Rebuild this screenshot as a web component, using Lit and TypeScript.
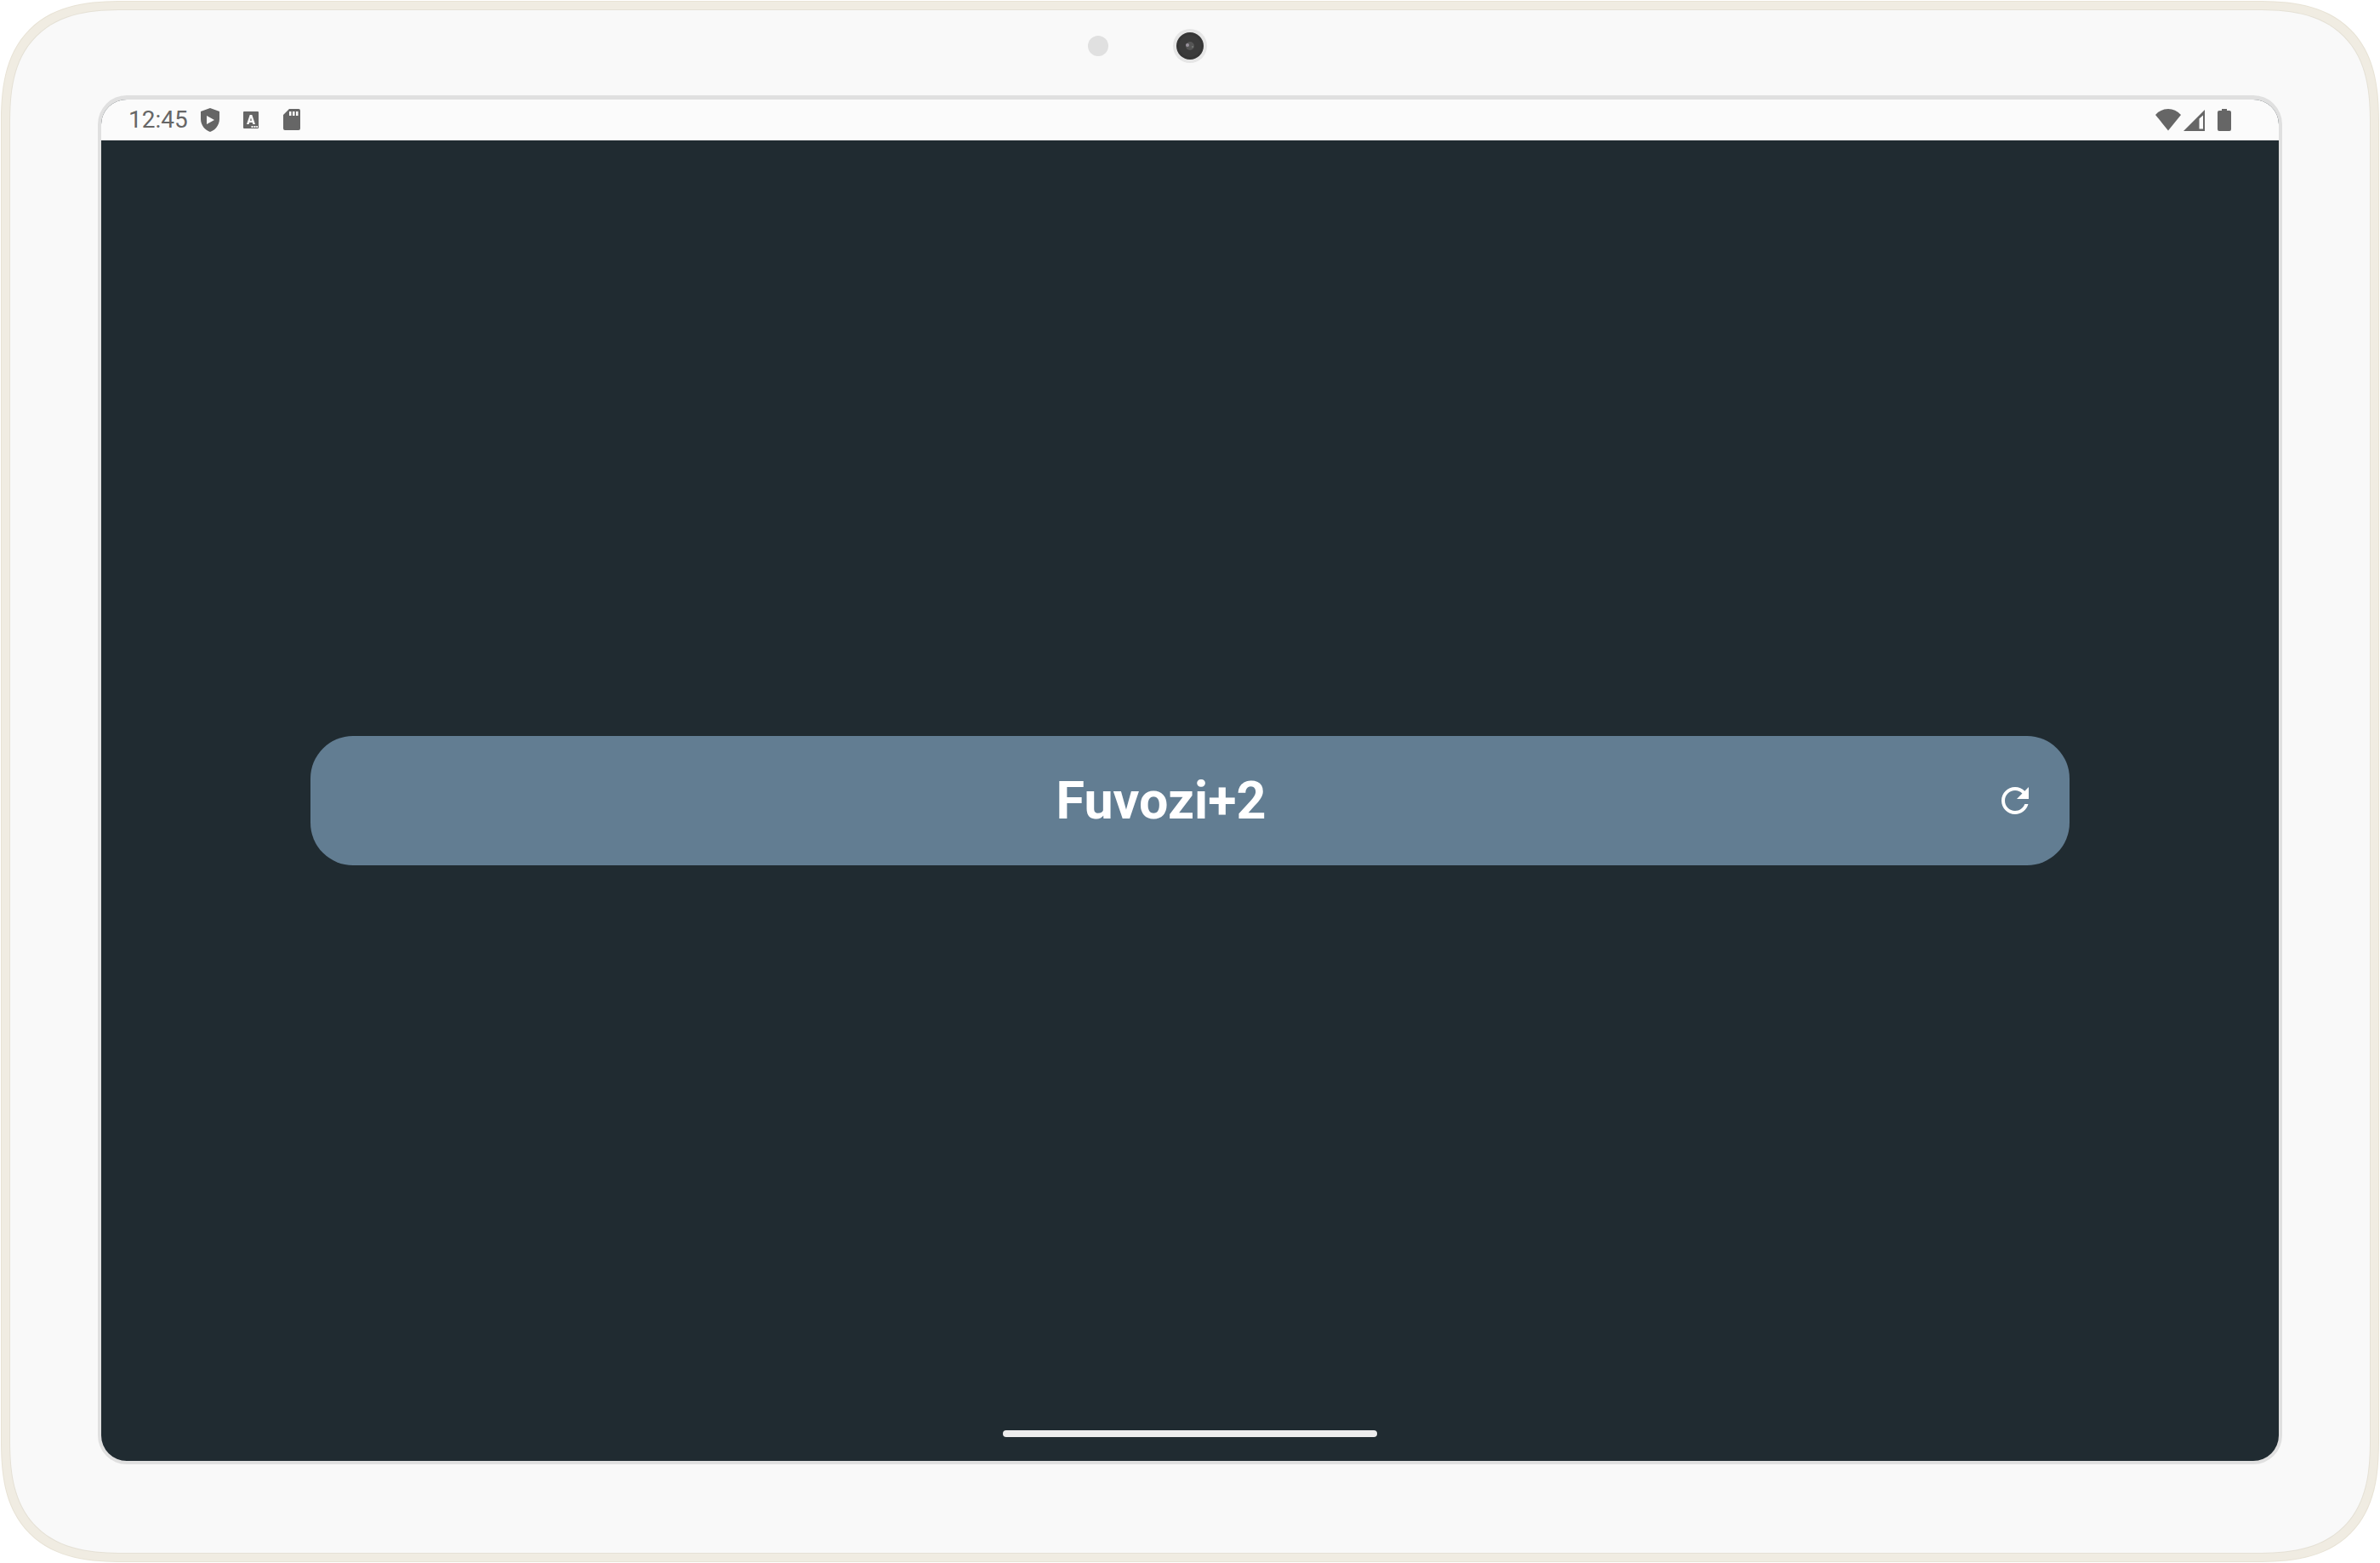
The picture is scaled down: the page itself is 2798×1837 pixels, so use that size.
import { LitElement, html, css } from "lit";
import { customElement, property } from "lit/decorators.js";

@customElement("status-bar")
class StatusBar extends LitElement {
  @property() time = "";

  static styles = css`
    :host {
      display: flex;
      align-items: center;
      justify-content: space-between;
      height: 48px;
      padding: 0 50px 0 32px;
      background: #fbfbfb;
      color: #666;
    }
    .group {
      display: flex;
      align-items: center;
    }
    .notices {
      gap: 20px;
      margin-left: 12px;
    }
    .time {
      font-size: 28px;
      line-height: 48px;
    }
    .icon {
      display: block;
      width: 28px;
      height: 28px;
      fill: currentColor;
    }
    .wifi,
    .signal {
      width: 32px;
    }
    .battery {
      margin-left: 4px;
    }
  `;

  render() {
    return html`
      <div class="group">
        <span class="time">${this.time}</span>
        <div class="group notices">
          <svg class="icon" viewBox="0 0 28 28" role="img" aria-label="Play Protect">
            <path fill-rule="evenodd" d="M14 0 25 4V13C25 20 20 26 14 28C8 26 3 20 3 13V4ZM10 9V19L19 14Z" />
          </svg>
          <svg class="icon" viewBox="0 0 28 28" role="img" aria-label="Text service">
            <path
              fill-rule="evenodd"
              d="M6 4H22Q23 4 23 5V23Q23 24 22 24H6Q5 24 5 23V5Q5 4 6 4ZM12.7 8 9 19H11.6L12.3 17H15.7L16.4 19H19L15.3 8ZM13 14.8 14 11.5 15 14.8ZM14.5 21V23H16.5V21ZM17.5 21V23H19.5V21ZM20.3 21V23H22V21Z"
            />
          </svg>
          <svg class="icon" viewBox="0 0 28 28" role="img" aria-label="SD card">
            <path
              fill-rule="evenodd"
              d="M11 1H22Q24 1 24 3V24Q24 26 22 26H6Q4 26 4 24V8ZM11 4V9H13.5V4ZM15 4V9H17.5V4ZM19 4V9H21.5V4Z"
            />
          </svg>
        </div>
      </div>
      <div class="group">
        <svg class="icon wifi" viewBox="0 0 32 28" role="img" aria-label="Wi-Fi">
          <path d="M16 26.500 1 8Q7.500 1 16 1T31 8Z" />
        </svg>
        <svg class="icon signal" viewBox="0 0 32 28" role="img" aria-label="Mobile signal">
          <path fill-rule="evenodd" d="M27 2V27H2ZM25 8.500 20.500 12.500V24.500H25Z" />
        </svg>
        <svg class="icon battery" viewBox="0 0 28 28" role="img" aria-label="Battery full">
          <path d="M11 1H17V3H20Q22 3 22 5V25Q22 27 20 27H8Q6 27 6 25V5Q6 3 8 3H11Z" />
        </svg>
      </div>
    `;
  }
}

@customElement("refresh-button")
class RefreshButton extends LitElement {
  @property() label = "";

  static styles = css`
    :host {
      display: block;
    }
    .button {
      display: flex;
      align-items: center;
      gap: 20px;
      box-sizing: border-box;
      width: 100%;
      min-height: 152px;
      padding: 0 40px;
      border: 0;
      border-radius: 50px;
      background: #627d92;
      color: #fff;
      font-family: inherit;
      cursor: pointer;
    }
    .label {
      flex: 1;
      text-align: center;
      font-size: 61px;
      font-weight: 700;
      line-height: 72px;
    }
    .icon {
      width: 48px;
      height: 48px;
      fill: currentColor;
    }
  `;

  render() {
    return html`
      <button class="button" type="button">
        <span class="label">${this.label}</span>
        <svg class="icon" viewBox="0 0 24 24" aria-hidden="true">
          <path
            d="M17.650 6.350C16.200 4.900 14.210 4 12 4c-4.420 0-7.990 3.580-7.990 8s3.570 8 7.990 8c3.730 0 6.840-2.550 7.730-6h-2.080c-.82 2.330-3.040 4-5.650 4-3.310 0-6-2.690-6-6s2.690-6 6-6c1.660 0 3.140.69 4.220 1.780L13 11h7V4z"
          />
        </svg>
      </button>
    `;
  }
}

@customElement("app-root")
class AppRoot extends LitElement {
  static styles = css`
    :host {
      display: flex;
      box-sizing: border-box;
      min-height: 100vh;
      padding: 1px;
      background: #fff;
      font-family: Roboto, sans-serif;
    }
    .edge,
    .rim,
    .lip,
    .device {
      flex: 1;
      display: flex;
      box-sizing: border-box;
    }
    .edge {
      padding: 1px;
      border-radius: 120px;
      background: #e8e3d6;
    }
    .rim {
      padding: 9px;
      border-radius: 119px;
      background: #f0ece2;
    }
    .lip {
      padding: 1px;
      border-radius: 110px;
      background: #e5e1d6;
    }
    .device {
      flex-direction: column;
      padding: 0 103px 104px;
      border-radius: 109px;
      background: #f9f9f9;
    }
    @supports (corner-shape: superellipse(1.4)) {
      .edge,
      .rim,
      .lip,
      .device {
        corner-shape: superellipse(1.4);
      }
      .edge {
        border-radius: 145px;
      }
      .rim {
        border-radius: 144px;
      }
      .lip {
        border-radius: 135px;
      }
      .device {
        border-radius: 134px;
      }
    }
    .bezel {
      display: grid;
      grid-template-columns: 1fr auto 1fr;
      align-items: center;
      height: 84px;
      padding-bottom: 16px;
    }
    .sensor {
      justify-self: end;
      width: 24px;
      height: 24px;
      margin-right: 76px;
      border-radius: 50%;
      background: #e0e0e0;
    }
    .camera {
      display: block;
      width: 40px;
      height: 40px;
    }
    .screen {
      flex: 1;
      display: flex;
      flex-direction: column;
      overflow: hidden;
      border: 4px solid #e0e0e0;
      border-top-width: 5px;
      border-radius: 34px;
      background: #202b31;
    }
    .content {
      flex: 1;
      display: flex;
      flex-direction: column;
      justify-content: center;
      padding: 36px 246px 0;
    }
    .footer {
      display: flex;
      justify-content: center;
      padding-bottom: 28px;
    }
    .handle {
      width: 440px;
      height: 8px;
      border-radius: 4px;
      background: #ececec;
    }
  `;

  render() {
    return html`
      <div class="edge">
        <div class="rim">
          <div class="lip">
            <div class="device">
              <div class="bezel">
                <span class="sensor"></span>
                <svg class="camera" viewBox="0 0 40 40" aria-hidden="true">
                  <circle cx="20" cy="20" r="20" fill="#e6e6e6" />
                  <circle cx="20" cy="20" r="16" fill="#363636" />
                  <circle cx="20" cy="20" r="13" fill="#3b3b3b" />
                  <circle cx="20" cy="20" r="5" fill="#555" />
                  <circle cx="17" cy="19" r="2" fill="#99929c" />
                  <circle cx="23" cy="21" r="1" fill="#777b78" />
                </svg>
              </div>
              <div class="screen">
                <status-bar time="12:45"></status-bar>
                <main class="content">
                  <refresh-button label="Fuvozi+2"></refresh-button>
                </main>
                <div class="footer"><div class="handle"></div></div>
              </div>
            </div>
          </div>
        </div>
      </div>
    `;
  }
}
